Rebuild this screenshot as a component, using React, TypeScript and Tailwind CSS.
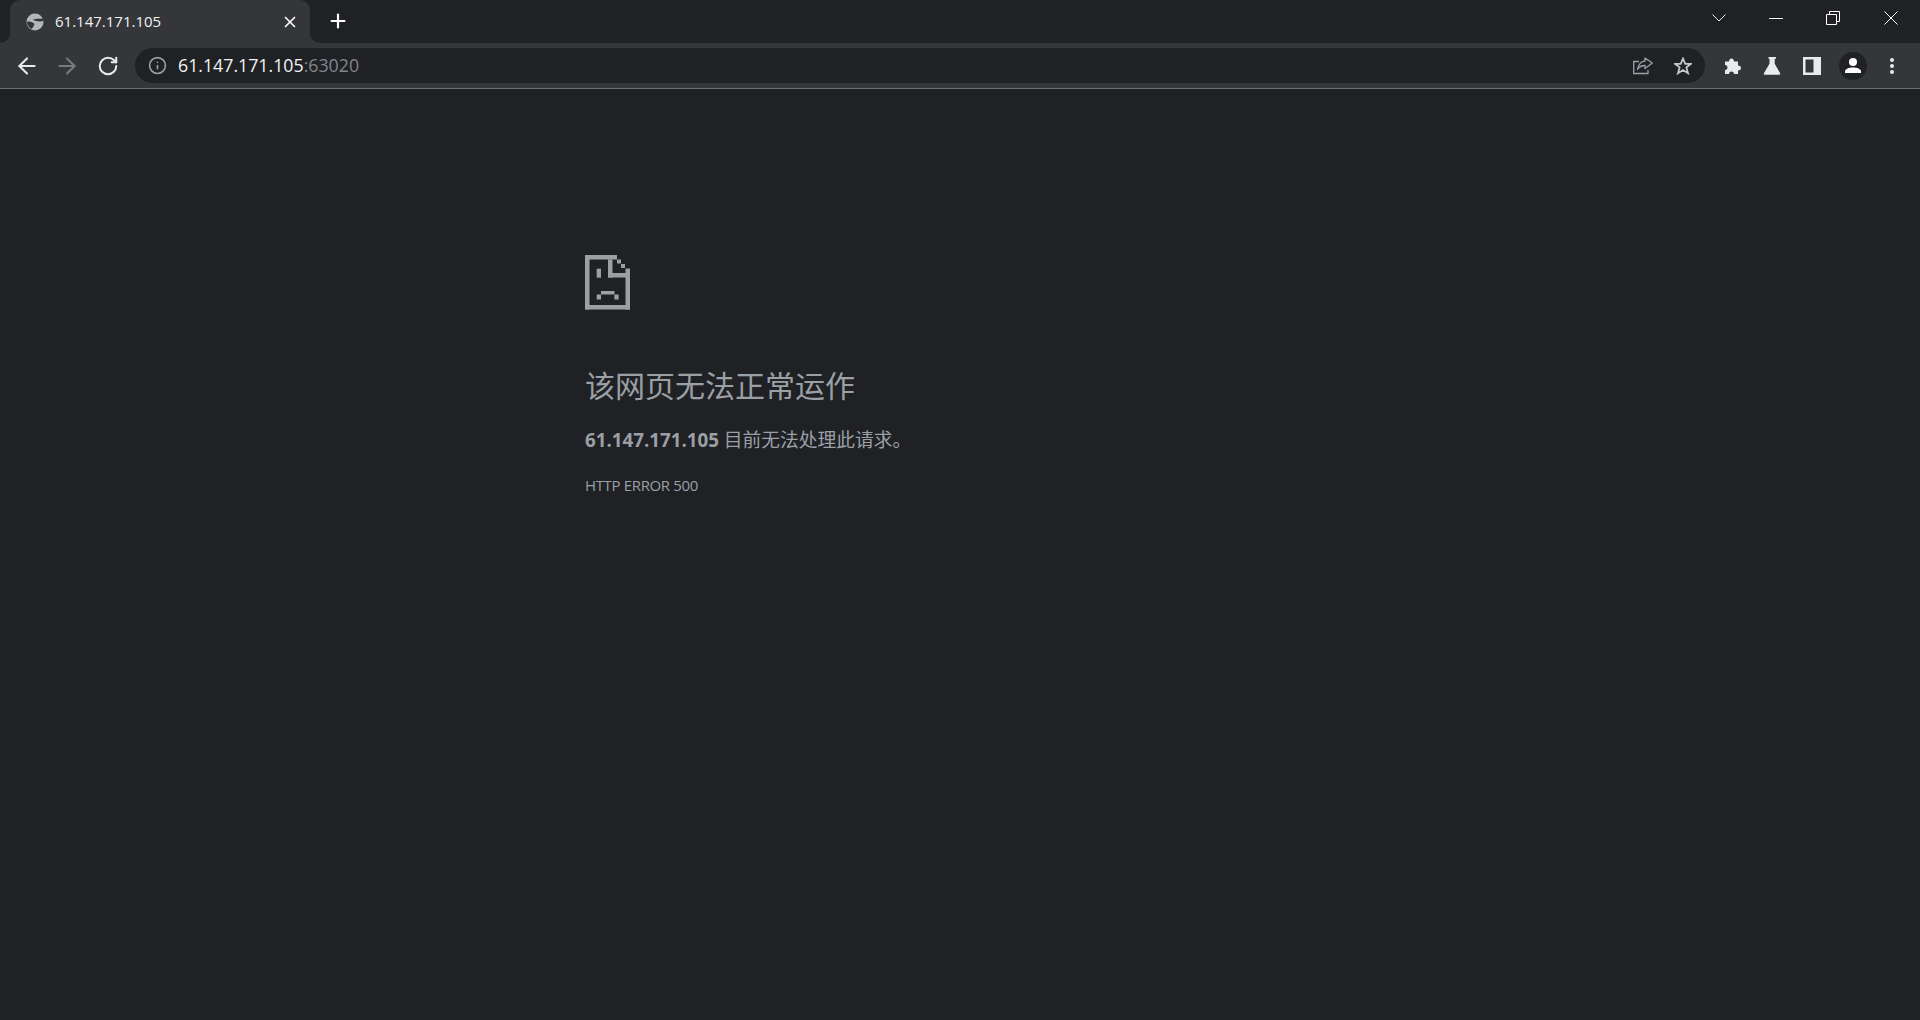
import { ArrowLeft, ArrowRight, RotateCw, Plus, X, Info } from "lucide-react";

const SANS = "font-['Open_Sans','Noto_Sans_CJK_SC',sans-serif]";

// pixel-art sad page, walls are 4.5px thick
function SadPage() {
  return (
    <svg width="46" height="56" viewBox="0 0 46 56" fill="#9e9fa1" className="block">
      <rect x="0" y="0" width="32" height="4.500" />
      <rect x="0" y="0" width="4.500" height="54.500" />
      <rect x="0" y="50" width="45" height="4.500" />
      <rect x="40.500" y="13.500" width="4.500" height="41" />
      <rect x="23" y="4.500" width="4.500" height="18" />
      <rect x="23" y="18" width="18" height="4.500" />
      <rect x="32" y="4.500" width="4" height="4" />
      <rect x="36" y="9" width="4" height="4" />
      <rect x="11.700" y="13.700" width="4.300" height="9" />
      <rect x="16" y="36" width="13.500" height="3.500" />
      <rect x="11.700" y="39.500" width="4.300" height="5" />
      <rect x="29.300" y="39.500" width="4.300" height="5" />
    </svg>
  );
}

function TabBar() {
  return (
    <div className="h-[43px] bg-[#202124] flex items-end shrink-0">
      <div className="relative ml-[10px] w-[300px] h-[43px] bg-[#35363a] rounded-t-[10px] flex items-center pl-[16px] pr-[11px]">
        {/* flared corners where the tab meets the toolbar */}
        <div className="absolute -left-[10px] bottom-0 w-[10px] h-[10px] bg-[#35363a]">
          <div className="w-full h-full bg-[#202124] rounded-br-[10px]" />
        </div>
        <div className="absolute -right-[10px] bottom-0 w-[10px] h-[10px] bg-[#35363a]">
          <div className="w-full h-full bg-[#202124] rounded-bl-[10px]" />
        </div>
        <svg width="18" height="18" viewBox="0 0 18 18" className="shrink-0">
          <circle cx="9" cy="9" r="8.500" fill="#b4b6b9" />
          <path d="M7 7C9 5 13 6 16.800 5.500L17.500 8C13 9 10 8 7 7Z" fill="#35363a" />
          <path d="M1 9C3 8 7 9 8.500 11C8 13 6.500 15 5.500 16C3 14.500 1 12 1 9Z" fill="#35363a" />
        </svg>
        <span className={`ml-[11px] flex-1 text-[15px] text-[#f1f3f4] ${SANS}`}>61.147.171.105</span>
        <X size={18} strokeWidth={2.2} className="text-white" />
      </div>
      <div className="h-[35px] w-[36px] ml-[10px] mb-[5px] flex items-center justify-center">
        <Plus size={22} strokeWidth={2.4} className="text-white" />
      </div>
      <div className="flex-1" />
      <div className="h-[43px] self-start flex items-center text-white pb-[7px]">
        <svg width="14" height="8" viewBox="0 0 14 8" fill="none" stroke="currentColor" strokeWidth="0.900" className="mr-[43px]">
          <path d="M.5.5L7 7l6.500-6.500" />
        </svg>
        <svg width="14" height="1" viewBox="0 0 14 1" fill="none" stroke="currentColor" className="mr-[43px]">
          <path d="M0 .5h14" />
        </svg>
        <svg width="14" height="14" viewBox="0 0 14 14" fill="none" stroke="currentColor" className="mr-[44px]">
          <path d="M.5 3.500h10v10H.5zM3.500 3.500V.5h10v10h-3" />
        </svg>
        <svg width="14" height="14" viewBox="0 0 14 14" fill="none" stroke="currentColor" className="mr-[22px]">
          <path d="M.5.5l13 13M13.500.5l-13 13" />
        </svg>
      </div>
    </div>
  );
}

function Toolbar() {
  return (
    <div className="h-[46px] bg-[#35363a] border-b border-[#6d6e71] flex items-center shrink-0">
      <ArrowLeft size={26} strokeWidth={1.900} className="ml-[14px] text-[#e8eaed]" />
      <ArrowRight size={26} strokeWidth={1.900} className="ml-[14px] text-[#77797c]" />
      <RotateCw size={22} strokeWidth={2.200} className="ml-[17px] text-[#e8eaed]" />
      <div className="ml-[16px] flex-1 h-[35px] rounded-full bg-[#202124] flex items-center pl-[13px] pr-[13px]">
        <Info size={19} strokeWidth={2} className="text-[#9aa0a6]" />
        <span className={`ml-[11px] flex-1 text-[17.750px] text-[#f1f3f4] ${SANS}`}>
          61.147.171.105<span className="text-[#80868b]">:63020</span>
        </span>
        <svg width="20" height="18" viewBox="0 0 20 18" fill="none" stroke="#9aa0a6" strokeWidth="1.300">
          <path d="M6 4.500H.7V16.500H15V13" />
          <path d="M12 1L19.300 6L12 11.500V8.500C8 8.500 6 10 4.500 12.500C5 8 8 4 12 4Z" strokeLinejoin="round" />
        </svg>
        <svg width="18" height="18" viewBox="0 0 18 18" fill="none" stroke="#c4c7c5" strokeWidth="1.800" className="ml-[21px]">
          <path d="M9 1.500L11.200 6.800H17L12.400 10.400L14 16.200L9 13L4 16.200L5.600 10.400L1 6.800H6.800Z" />
        </svg>
      </div>
      <svg width="20" height="20" viewBox="0 0 20 20" fill="#e8eaed" className="ml-[18px]">
        <path d="M2 5.500h4c0-1.500.8-3 2.500-3S11 4 11 5.500h4v4c1.500 0 3 .8 3 2.500s-1.500 2.500-3 2.500v3.500h-4c0-1.500-1-2.500-2.500-2.500S6 16.500 6 18H2v-4c1.500 0 2.500-1 2.500-2.500S3.500 9 2 9Z" />
      </svg>
      <svg width="20" height="20" viewBox="0 0 20 20" fill="#e8eaed" className="ml-[19px]">
        <path d="M6.500 1H14V2.700H12.700V7.700L18 17C18.500 18 18 18.800 17 18.800H3C2 18.800 1.500 18 2 17L7.500 7.700V2.700H6.500Z" />
      </svg>
      <svg width="18" height="18" viewBox="0 0 18 18" className="ml-[21px]">
        <path d="M0 0H18V18H0ZM2.500 2.500V15.500H10.500V2.500Z" fill="#e8eaed" fillRule="evenodd" />
      </svg>
      <div className="ml-[18px] w-[28px] h-[28px] rounded-full bg-[#202124] flex items-center justify-center">
        <svg width="18" height="18" viewBox="0 0 18 18" fill="#fff">
          <circle cx="9" cy="5" r="4" />
          <path d="M1 16v-1.500C1 12 5 10.500 9 10.500s8 1.500 8 4V16Z" />
        </svg>
      </div>
      <svg width="6" height="18" viewBox="0 0 6 18" fill="#e8eaed" className="ml-[22px] mr-[25px]">
        <circle cx="3" cy="3" r="2" />
        <circle cx="3" cy="9" r="2" />
        <circle cx="3" cy="15" r="2" />
      </svg>
    </div>
  );
}

export default function App() {
  return (
    <div className="w-[1920px] h-[1020px] bg-[#202124] flex flex-col overflow-hidden">
      <TabBar />
      <Toolbar />
      <main className={`pl-[585px] pt-[166px] text-[#9aa0a6] ${SANS}`}>
        <SadPage />
        <h1 className="mt-[55px] text-[30px] leading-[40px] font-normal">该网页无法正常运作</h1>
        <p className="mt-[20px] text-[18.750px] leading-[28px]">
          <strong className="font-bold">61.147.171.105</strong> 目前无法处理此请求。
        </p>
        <div className="mt-[21px] text-[15px] leading-[20px] tracking-[-0.350px]">HTTP ERROR 500</div>
      </main>
    </div>
  );
}
